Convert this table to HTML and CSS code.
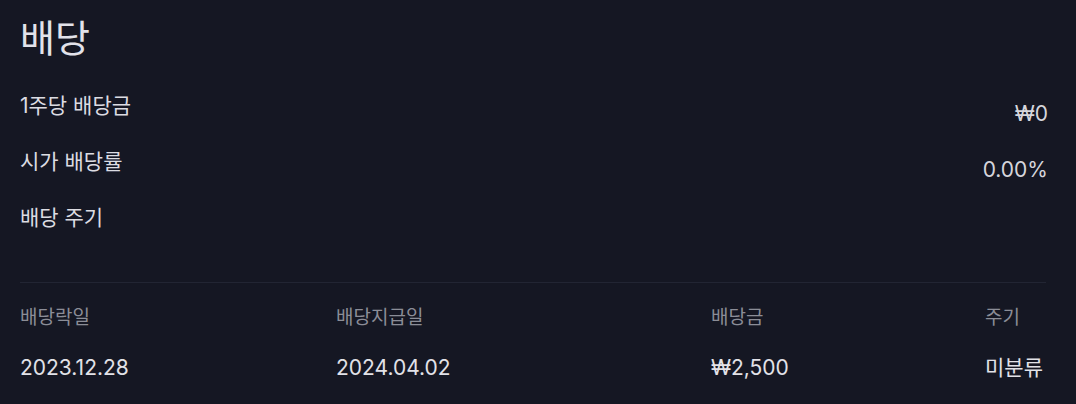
FILE: index.html
```html
<!DOCTYPE html>
<html lang="ko">
<head>
    <meta charset="UTF-8">
    <title>배당</title>
    <link rel="stylesheet" href="styles.css">
</head>
<body>
    <div class="panel">
        <h1 class="titre">배당</h1>

        <div class="infos">
            <div class="ligne">
                <span class="libelle">1주당 배당금</span>
                <span class="valeur">₩0</span>
            </div>
            <div class="ligne">
                <span class="libelle">시가 배당률</span>
                <span class="valeur">0.00%</span>
            </div>
            <div class="ligne">
                <span class="libelle">배당 주기</span>
                <span class="valeur"></span>
            </div>
        </div>

        <div class="historique">
            <div class="entete">배당락일</div>
            <div class="entete">배당지급일</div>
            <div class="entete">배당금</div>
            <div class="entete">주기</div>

            <div class="cellule">2023.12.28</div>
            <div class="cellule">2024.04.02</div>
            <div class="cellule">₩2,500</div>
            <div class="cellule">미분류</div>
        </div>
    </div>
</body>
</html>
```

FILE: styles.css
```css
body {
    margin: 0;
    padding: 0;
    background-color: #151723;
    font-family: Inter, "Noto Sans CJK KR", sans-serif;
    color: #dcdce2;
}
.panel {
    padding: 10px 30px 0 20px;
}
.titre {
    margin: 0;
    font-size: 38px;
    font-weight: 400;
    line-height: 56px;
    color: #e2e2ea;
}
.infos {
    margin-top: 26px;
    padding-bottom: 22px;
    border-bottom: 1px solid #222533;
}
.ligne {
    display: flex;
    justify-content: space-between;
    align-items: flex-start;
    height: 56px;
}
.libelle {
    font-size: 21px;
    line-height: 28px;
    color: #dcdce2;
}
.valeur {
    margin-top: 8px;
    margin-right: -2px;
    font-size: 21px;
    line-height: 28px;
    color: #d6d6dc;
}
.historique {
    display: grid;
    grid-template-columns: 316px 375px 274px 1fr;
    padding-top: 20px;
}
.entete {
    font-size: 19px;
    line-height: 30px;
    color: #8b8d97;
}
.cellule {
    margin-top: 20px;
    font-size: 21px;
    line-height: 30px;
    color: #e2e2e8;
}
```
